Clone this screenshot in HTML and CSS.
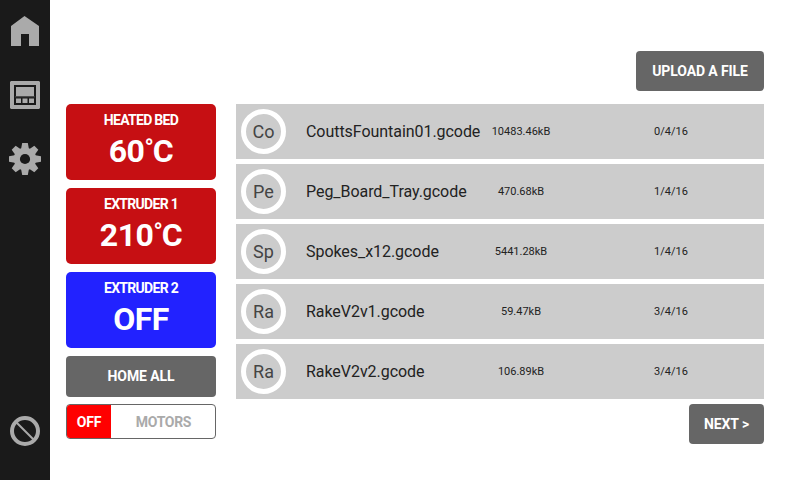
FILE: index.html
```html
<!DOCTYPE html>
<html lang="en">
<head>
<meta charset="utf-8">
<title>Files</title>
<link rel="stylesheet" href="styles.css">
</head>
<body>
<nav class="sidebar">
  <svg class="icon" viewBox="0 0 34 34"><path d="M3 12 16.5 2 31 12V32H21V20H13V32H3Z"/></svg>
  <svg class="icon" viewBox="0 0 34 34"><path fill-rule="evenodd" d="M3 3H31L32 4V30L31 31H3L2 30V4ZM6 7V27H28V7Z"/><path d="M8 9H26V18.5H8ZM8 20.5H13V25H8ZM14.5 20.5H19.5V25H14.5ZM21 20.5H26V25H21Z"/><path class="seam" d="M7 18.8H27"/></svg>
  <svg class="icon" viewBox="-17 -17 34 34">
    <g><path id="tooth" d="M-4.1-9-2.8-16H2.8L4.1-9V9L2.8 16H-2.8L-4.1 9Z"/><use href="#tooth" transform="rotate(45)"/><use href="#tooth" transform="rotate(90)"/><use href="#tooth" transform="rotate(135)"/></g>
    <circle r="11.2"/><circle class="hole" r="5.1"/>
  </svg>
  <svg class="icon stop" viewBox="-17 -17 34 34"><circle class="ring" r="13"/><path class="slash" d="M-9-9 9 9"/></svg>
</nav>
<main class="page">
  <section class="controls">
    <div class="card hot"><span class="label">HEATED BED</span><span class="value">60<span class="degree">°</span>C</span></div>
    <div class="card hot"><span class="label">EXTRUDER 1</span><span class="value">210<span class="degree">°</span>C</span></div>
    <div class="card cold"><span class="label">EXTRUDER 2</span><span class="value">OFF</span></div>
    <button class="button home">HOME ALL</button>
    <div class="toggle"><span class="state">OFF</span><span class="name">MOTORS</span></div>
  </section>
  <section class="files">
    <button class="button upload">UPLOAD A FILE</button>
    <ul class="list">
      <li class="row"><span class="badge">Co</span><span class="file">CouttsFountain01.gcode</span><span class="size">10483.46kB</span><span class="date">0/4/16</span></li>
      <li class="row"><span class="badge">Pe</span><span class="file">Peg_Board_Tray.gcode</span><span class="size">470.68kB</span><span class="date">1/4/16</span></li>
      <li class="row"><span class="badge">Sp</span><span class="file">Spokes_x12.gcode</span><span class="size">5441.28kB</span><span class="date">1/4/16</span></li>
      <li class="row"><span class="badge">Ra</span><span class="file">RakeV2v1.gcode</span><span class="size">59.47kB</span><span class="date">3/4/16</span></li>
      <li class="row"><span class="badge">Ra</span><span class="file">RakeV2v2.gcode</span><span class="size">106.89kB</span><span class="date">3/4/16</span></li>
    </ul>
    <button class="button next">NEXT &gt;</button>
  </section>
</main>
</body>
</html>
```
FILE: styles.css
```css
* { box-sizing: border-box; }
body { margin: 0; height: 480px; display: flex; background: #fff; color: #222; font-family: Roboto, sans-serif; overflow: hidden; }
.sidebar { width: 50px; height: 480px; padding: 14px 8px 32px; background: #1a1a1a; display: flex; flex-direction: column; gap: 30px; }
.icon { width: 34px; height: 34px; fill: #aaa; flex: none; }
.stop { margin-top: auto; }
.seam { stroke: #444; stroke-width: 1; }
.hole { fill: #1a1a1a; }
.ring { fill: none; stroke: #aaa; stroke-width: 4; }
.slash { stroke: #aaa; stroke-width: 2; }
.page { flex: 1; display: flex; gap: 20px; padding: 51px 36px 0 16px; }
.controls { width: 150px; padding-top: 53px; display: flex; flex-direction: column; gap: 8px; }
.card { height: 76px; border-radius: 5px; color: #fff; font-weight: 700; display: flex; flex-direction: column; align-items: center; padding-top: 6px; }
.hot { background: #c60f13; }
.cold { background: #2222ff; }
.label { font-size: 14px; line-height: 20px; letter-spacing: -.7px; }
.value { font-size: 32px; line-height: 42px; letter-spacing: -.5px; }
.degree { font-size: 24px; line-height: 0; vertical-align: 6px; letter-spacing: -1px; }
.button { border: 0; border-radius: 4px; background: #666; color: #fff; font: 700 14px/40px Roboto, sans-serif; letter-spacing: -.1px; padding: 0; height: 40px; text-align: center; white-space: nowrap; }
.home { height: 41px; padding-bottom: 1px; }
.toggle { height: 35px; margin-top: -1px; border: 1px solid #666; border-radius: 4px; display: flex; font-size: 14px; font-weight: 700; line-height: 34px; text-align: center; overflow: hidden; }
.state { width: 44px; background: #f00; color: #fff; letter-spacing: -.2px; }
.name { flex: 1; color: #aaa; letter-spacing: -.3px; padding-left: 1px; }
.files { flex: 1; display: flex; flex-direction: column; align-items: flex-end; }
.upload { width: 128px; }
.list { list-style: none; margin: 13px 0 5px; padding: 0; width: 100%; display: grid; gap: 5px; }
.row { height: 55px; background: #ccc; display: grid; grid-template-columns: 50px 175px 110px 1fr; align-items: center; padding-left: 5px; }
.badge { width: 45px; height: 45px; border: 5px solid #fff; border-radius: 50%; color: #444; font-size: 18px; line-height: 35px; text-align: center; }
.file { font-size: 16px; padding-left: 15px; white-space: nowrap; letter-spacing: -.05px; }
.size, .date { font-size: 11px; text-align: center; white-space: nowrap; }
.date { padding-left: 2px; }
.next { width: 75px; }
```
